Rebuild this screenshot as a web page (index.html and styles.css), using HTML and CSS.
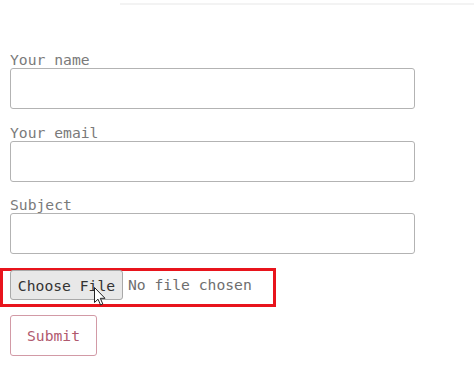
FILE: index.html
```html
<!DOCTYPE html>
<html>
<head>
<meta charset="utf-8">
<link rel="stylesheet" href="styles.css">
</head>
<body>
<div class="topline"></div>
<form class="form">
  <div class="group">
    <label class="label">Your name</label>
    <div class="input"></div>
  </div>
  <div class="group">
    <label class="label">Your email</label>
    <div class="input"></div>
  </div>
  <div class="group">
    <label class="label">Subject</label>
    <div class="input"></div>
  </div>
  <div class="filebox">
    <span class="filebtn">Choose File</span>
    <span class="filetext">No file chosen</span>
    <svg class="cursor" width="13" height="19" viewBox="0 0 13 19">
      <path d="M0.5 0.5 L0.5 15.5 L4 12.2 L6.6 18 L8.8 17 L6.3 11.3 L11 11.3 Z" fill="#fff" stroke="#222" stroke-width="1" stroke-linejoin="round"/>
    </svg>
  </div>
  <div class="submit">Submit</div>
</form>
</body>
</html>
```
FILE: styles.css
```css
html, body {
  margin: 0;
  padding: 0;
  background: #fff;
}
body {
  width: 474px;
  height: 387px;
  overflow: hidden;
  font-family: "DejaVu Sans Mono", monospace;
  font-size: 14.7px;
}
.topline {
  margin: 3px 0 0 120px;
  height: 2px;
  background: #f3f3f3;
}
.form {
  margin-top: 46px;
  padding-left: 10px;
  display: flex;
  flex-direction: column;
}
.group {
  display: flex;
  flex-direction: column;
  margin-bottom: 14.5px;
}
.group:nth-child(3) {
  margin-bottom: 14px;
}
.label {
  color: #7a7a7a;
  line-height: 17px;
  height: 17px;
}
.input {
  width: 405px;
  height: 41px;
  box-sizing: border-box;
  border: 1px solid #b3b3b3;
  border-radius: 3px;
  background: #fff;
}
.filebox {
  position: relative;
  margin-left: -10px;
  width: 276px;
  height: 39px;
  box-sizing: border-box;
  border: 3px solid #e8141c;
  padding: 0 0 0 7px;
  display: flex;
  align-items: flex-start;
}
.filebtn {
  margin-top: -1px;
  width: 113px;
  height: 30px;
  box-sizing: border-box;
  border: 1px solid #a9a9a9;
  border-radius: 3px;
  background: #e8e8e8;
  color: #333;
  display: flex;
  align-items: center;
  justify-content: center;
  padding-top: 1px;
}
.filetext {
  margin-left: 5px;
  height: 30px;
  line-height: 30px;
  margin-top: -1px;
  color: #6e6e6e;
}
.cursor {
  position: absolute;
  left: 91px;
  top: 16px;
}
.submit {
  margin-top: 8px;
  width: 87px;
  height: 41px;
  box-sizing: border-box;
  border: 1px solid #d29aa6;
  border-radius: 3px;
  color: #b0596e;
  display: flex;
  align-items: center;
  justify-content: center;
}
```
